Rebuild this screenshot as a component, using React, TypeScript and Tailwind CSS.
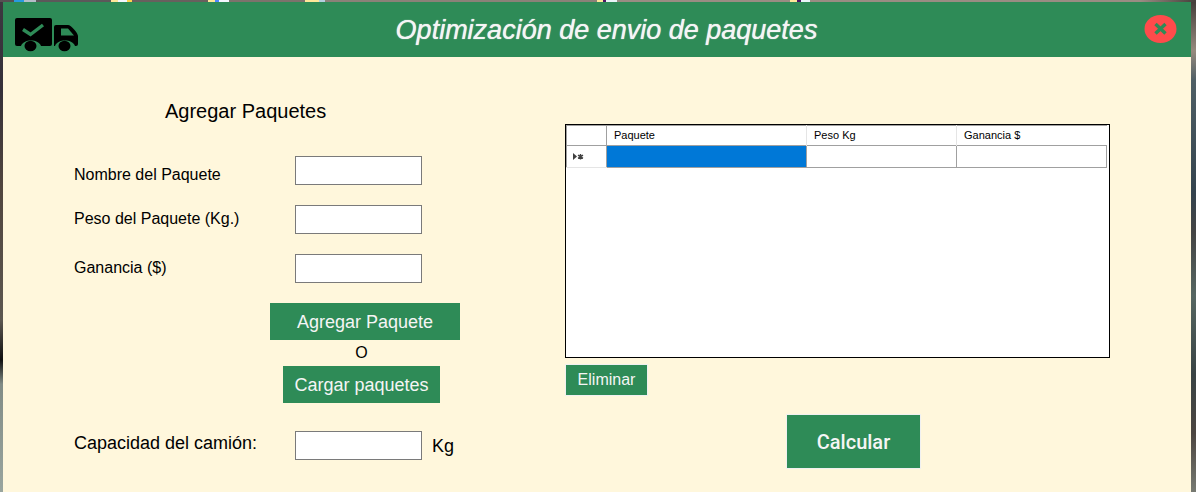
import type { ButtonHTMLAttributes } from 'react';

function TruckLogo() {
  return (
    <svg width="64" height="34" viewBox="0 0 64 34" role="img" aria-label="Camión">
      <path d="M2 0H35Q37 0 37 2V26Q37 28 35 28H26C24 20.5 8 20.5 6 28H2Q0 28 0 26V2Q0 0 2 0Z" fill="#000" />
      <path d="M8 11.5L15.5 16.5L28 7" fill="none" stroke="#2e8b57" strokeWidth="3.4" />
      <ellipse cx="15.5" cy="28" rx="6" ry="5.2" />
      <path d="M41 7H53C56 7 63 15 63 18V26Q63 28 61 28H60C58 20.5 42 20.5 40 28H39V9Q39 7 41 7Z" fill="#000" />
      <path d="M46 10.5H53L59 17.5H46Z" fill="#2e8b57" />
      <ellipse cx="49.5" cy="28" rx="6" ry="5.2" />
    </svg>
  );
}

function ActionButton({ className = '', ...props }: ButtonHTMLAttributes<HTMLButtonElement>) {
  return <button type="button" className={`bg-[#2e8b57] text-[#f5f5f5] ${className}`} {...props} />;
}

function Field({ id, label, className }: { id: string; label: string; className: string }) {
  return (
    <div className="flex items-center">
      <label htmlFor={id} className={`w-[221px] text-base leading-5 ${className}`}>{label}</label>
      <input id={id} className="h-[29px] w-[127px] border border-[#7a7a7a] bg-white px-1 outline-none" />
    </div>
  );
}

function PackageTable() {
  return (
    <div className="h-[234px] border border-black bg-white pr-[2px]">
      <table className="w-full table-fixed border-collapse text-left text-[11px]">
        <colgroup>
          <col className="w-10" />
          <col className="w-[200px]" />
          <col className="w-[150px]" />
          <col className="w-[150px]" />
        </colgroup>
        <thead>
          <tr className="h-5 border-t border-b border-[#a0a0a0]">
            <th className="border-r border-l border-[#a0a0a0]" aria-label="Fila" />
            <th className="border-r border-[#e5e5e5] px-[7px] font-normal">Paquete</th>
            <th className="border-r border-[#e5e5e5] px-[7px] font-normal">Peso Kg</th>
            <th className="px-[7px] font-normal">Ganancia $</th>
          </tr>
        </thead>
        <tbody>
          <tr className="h-[22px]">
            <td className="border-b border-l border-b-[#e5e5e5] border-l-[#a0a0a0] pl-[6px]">
              <svg width="11" height="9" viewBox="0 0 11 9" aria-label="Fila nueva">
                <path d="M0 1L4 4.5L0 8Z" fill="#404040" />
                <path d="M7.5 2V7.5M5 3.2L10 6.3M10 3.2L5 6.3" stroke="#404040" strokeWidth="1.4" />
              </svg>
            </td>
            <td className="border border-[#a0a0a0] bg-[#0078d7]" />
            <td className="border border-[#a0a0a0]" />
            <td className="border border-[#a0a0a0]" />
          </tr>
        </tbody>
      </table>
    </div>
  );
}

export default function App() {
  return (
    <div className="flex min-h-screen flex-col bg-[#8b8178] font-['Liberation_Sans',Arial,sans-serif] text-black">
      <div className="h-[2px] bg-[linear-gradient(90deg,#555052_0_14px,#289be0_14px_24px,#b4bdc8_24px_36px,#5c585a_36px_111px,#ffe799_111px_118px,#f4f7ff_118px_127px,#ffd34f_127px_132px,#68605e_132px_208px,#ffe799_208px_215px,#4f86ff_215px_219px,#f4f7ff_219px_229px,#7d726c_229px_305px,#ffe799_305px_319px,#b4d0df_319px_325px,#8b8178_325px_597px,#ffe799_597px_603px,#4c1765_603px_606px,#e9f4f8_606px_617px,#9a8c83_617px_790px,#ffe799_790px_797px,#4c1765_797px_801px,#e9f4f8_801px_810px,#9a8c83_810px_1140px,#453f3b)]" />
      <div className="flex flex-1">
        <div className="w-[3px] bg-[linear-gradient(180deg,#3c3840,#353039_18%,#51463f_38%,#5c5750_65%,#101010_73%,#818c86_78%,#99a59f)]" />
        <div className="flex-1 bg-[#fff7dc]">
          <header className="flex h-[55px] items-center bg-[#2e8b57] pr-[14px] pl-3">
            <div className="pt-[10px]">
              <TruckLogo />
            </div>
            <h1 className="flex-1 pr-[10px] text-center text-[27px] leading-8 font-normal text-[#f5f5f5] italic [text-shadow:0_0_1px_#f5f5f5]">
              Optimización de envio de paquetes
            </h1>
            <button type="button" aria-label="Cerrar">
              <svg width="33" height="30" viewBox="0 0 33 30">
                <ellipse cx="16.5" cy="14" rx="16" ry="14" fill="#ff4b4b" />
                <path d="M11.5 9L21.5 18.5M21.5 9L11.5 18.5" stroke="#2e8b57" strokeWidth="3.4" />
              </svg>
            </button>
          </header>
          <main className="flex">
            <form className="w-[562px] shrink-0 pt-[42px] pl-[71px]">
              <h2 className="pl-[91px] text-xl leading-6">Agregar Paquetes</h2>
              <div className="flex flex-col gap-5 pt-[33px]">
                <Field id="nombre" label="Nombre del Paquete" className="pt-[9px]" />
                <Field id="peso" label="Peso del Paquete (Kg.)" className="pb-[2px]" />
                <Field id="ganancia" label="Ganancia ($)" className="pb-[2px]" />
              </div>
              <div className="pt-5 pl-[196px]">
                <ActionButton className="block h-[37px] w-[190px] text-lg">Agregar Paquete</ActionButton>
                <div className="flex w-[183px] flex-col items-center">
                  <span className="h-[26px] text-base leading-[26px]">O</span>
                  <ActionButton className="h-[37px] w-[157px] text-lg">Cargar paquetes</ActionButton>
                </div>
              </div>
              <div className="flex items-center pt-7">
                <label htmlFor="capacidad" className="w-[221px] pb-[5px] text-lg leading-6">Capacidad del camión:</label>
                <input id="capacidad" className="h-[29px] w-[127px] border border-[#7a7a7a] bg-white px-1 outline-none" />
                <span className="pl-[10px] text-lg leading-6">Kg</span>
              </div>
            </form>
            <section className="flex-1 pt-[67px] pr-[81px]">
              <PackageTable />
              <div className="pt-[6px]">
                <ActionButton className="h-8 w-[83px] border border-[#f0f0f0]">Eliminar</ActionButton>
              </div>
              <div className="flex justify-center pt-[18px] pl-[32px]">
                <ActionButton className="h-[55px] w-[135px] border border-[#f0f0f0] font-['Roboto',sans-serif] text-xl font-medium">
                  Calcular
                </ActionButton>
              </div>
            </section>
          </main>
        </div>
        <div className="w-[5px] bg-[linear-gradient(180deg,#453f3b,#968a7e_10%,#4f5f65_16%,#34434d_39%,#444444_47%,#566661_60%,#394344_76%,#4c4540_88%,#777a72)]" />
      </div>
    </div>
  );
}
